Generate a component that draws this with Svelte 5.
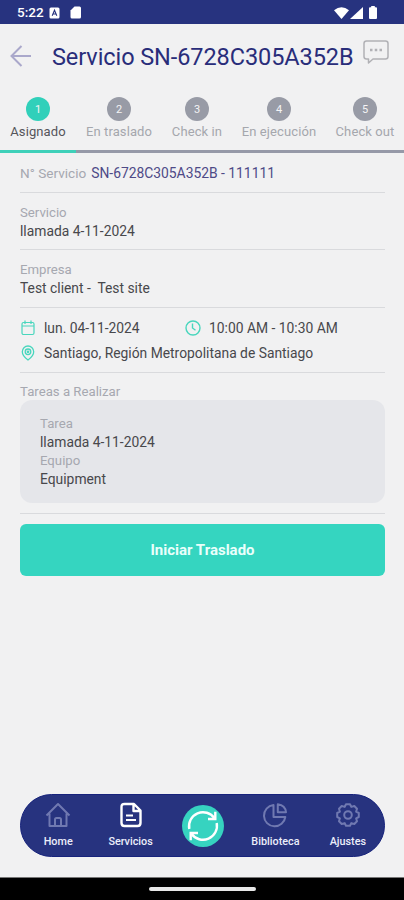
<script lang="ts">
    type Step = { label: string; width: number };
    type Tab = { id: string; label: string };

    const steps: Array<Step> = [
        { label: "Asignado", width: 76 },
        { label: "En traslado", width: 86 },
        { label: "Check in", width: 70 },
        { label: "En ejecución", width: 94 },
        { label: "Check out", width: 78 },
    ];
    const tabs: Array<Tab> = [
        { id: "home", label: "Home" },
        { id: "services", label: "Servicios" },
        { id: "sync", label: "" },
        { id: "library", label: "Biblioteca" },
        { id: "settings", label: "Ajustes" },
    ];

    let currentStep = $state(0);
    let currentTab = $state("services");
    const serviceCode = "SN-6728C305A352B";
</script>

<div class="screen">
    <div class="status-bar">
        <span class="time">5:22</span>
        <svg class="app-badge" width="11" height="12" viewBox="0 0 11 12">
            <rect x="0.5" y="0.5" width="10" height="11" rx="1.5" fill="#fff" />
            <path d="M3.2 8.8 5.5 3.2 7.8 8.8M4.1 7h2.8" fill="none" stroke="#27337f" stroke-width="1.1" />
        </svg>
        <svg width="12" height="13" viewBox="0 0 12 13">
            <path d="M4.5 0.5H9.5Q11 .5 11 2V11Q11 12.5 9.500 12.500H2Q.5 12.500 .5 11V4.500Z" fill="#fff" />
        </svg>
        <div class="signals">
            <svg width="15" height="12" viewBox="0 0 15 12">
                <path d="M0 3.200Q7.500-2.600 15 3.200L7.500 12Z" fill="#fff" />
            </svg>
            <svg width="13" height="12" viewBox="0 0 13 12"><path d="M13 0V12H0Z" fill="#fff" /></svg>
            <svg class="battery" width="8" height="13" viewBox="0 0 8 13">
                <path d="M2.200 0h3.600v1.300H7q1 0 1 1V12q0 1-1 1H1q-1 0-1-1V2.300q0-1 1-1h1.200Z" fill="#fff" />
            </svg>
        </div>
    </div>

    <header>
        <button class="back" aria-label="Volver">
            <svg width="22" height="22" viewBox="0 0 22 22" fill="none" stroke="#aaa8cb" stroke-width="2">
                <path d="M21 11H2M11.500 1 1.500 11l10 10" />
            </svg>
        </button>
        <h1>Servicio {serviceCode}</h1>
        <button class="chat" aria-label="Chat">
            <svg width="26" height="24" viewBox="0 0 26 24" fill="none" stroke="#b1b1b5" stroke-width="1.500">
                <path d="M3.500 1H22.500Q25 1 25 3.500V16.500Q25 19 22.500 19H10L5.500 23V19H3.500Q1 19 1 16.500V3.500Q1 1 3.500 1Z" stroke-linejoin="round" />
                <path d="M7 10h2.500M11.750 10h2.500M16.500 10H19" stroke-width="2.500" />
            </svg>
        </button>
    </header>

    <div class="steps">
        {#each steps as step, i}
            <button class="step" class:active={i == currentStep} style="width: {step.width}px" onclick={() => currentStep = i}>
                <span class="number">{i + 1}</span>
                <span class="step-label">{step.label}</span>
            </button>
        {/each}
    </div>

    <main>
        <section class="service-number">
            <span class="muted">N° Servicio</span>
            <span class="code">{serviceCode} - 111111</span>
        </section>
        <section class="field">
            <div class="muted">Servicio</div>
            <div>llamada 4-11-2024</div>
        </section>
        <section class="field company">
            <div class="muted">Empresa</div>
            <div>Test client -&nbsp; Test site</div>
        </section>
        <section class="schedule">
            <div class="when">
                <div class="info date">
                    <svg width="16" height="16" viewBox="0 0 16 16" fill="none" stroke="#48d6bd" stroke-width="1.200">
                        <rect x="2" y="2.500" width="12" height="12" rx="1.500" />
                        <path d="M2 6h12M5 .5v3.500M11 .5v3.500" />
                    </svg>
                    <span>lun. 04-11-2024</span>
                </div>
                <div class="info">
                    <svg width="16" height="16" viewBox="0 0 16 16" fill="none" stroke="#48d6bd" stroke-width="1.400">
                        <circle cx="8" cy="8" r="7" />
                        <path d="M7.500 3.500V8l3 2.200" />
                    </svg>
                    <span>10:00 AM - 10:30 AM</span>
                </div>
            </div>
            <div class="info">
                <svg width="16" height="16" viewBox="0 0 16 16" fill="none" stroke="#48d6bd" stroke-width="1.300">
                    <path d="M8 15Q2.300 10.800 2.300 6.700A5.700 5.700 0 0 1 13.700 6.700Q13.700 10.800 8 15Z" />
                    <circle cx="8" cy="6.800" r="2.800" />
                    <circle cx="8" cy="6.800" r="0.700" />
                </svg>
                <span>Santiago, Región Metropolitana de Santiago</span>
            </div>
        </section>
        <section class="tasks">
            <div class="muted">Tareas a Realizar</div>
            <div class="card">
                <div class="muted">Tarea</div>
                <div>llamada 4-11-2024</div>
                <div class="muted">Equipo</div>
                <div>Equipment</div>
            </div>
        </section>
        <button class="start">Iniciar Traslado</button>
    </main>

    <nav>
        {#each tabs as tab}
            <button class="tab" class:selected={tab.id == currentTab} aria-label={tab.label || "Sincronizar"} onclick={() => currentTab = tab.id}>
                {#if tab.id == "sync"}
                    <svg class="sync" width="42" height="42" viewBox="0 0 42 42" fill="none" stroke="#fff" stroke-width="2.400">
                        <circle cx="21" cy="21" r="21" fill="#36d3c0" stroke="none" />
                        <path d="M7.300 24A14 14 0 0 1 32.500 13.200M34.700 18A14 14 0 0 1 9.500 28.800" />
                        <path d="M33.300 6.800V14H26M8.700 35.200V28H16" />
                    </svg>
                {:else}
                    <svg width="26" height="26" viewBox="0 0 26 26" fill="none" stroke="currentColor" stroke-width="2" stroke-linejoin="round">
                        {#if tab.id == "home"}
                            <path d="M1.500 13.500 13 2l11.500 11.500M4.500 11.500V24H21.500V11.500M10 24V17.500Q10 16 11.500 16H14.500Q16 16 16 17.500V24" />
                        {:else if tab.id == "services"}
                            <path d="M6.500 2H16L22.500 8.500V21Q22.500 24 19.500 24H6.500Q3.500 24 3.500 21V5Q3.500 2 6.500 2ZM15.500 2V9H22.500" stroke-width="2.400" />
                            <path d="M8 13.500H15M8 18H18" stroke-width="2.200" />
                        {:else if tab.id == "library"}
                            <path d="M11.500 3A10.700 10.700 0 1 0 23.300 15H11.500ZM15.800 2.300V10.300H24Q23.300 3.300 15.800 2.300Z" />
                        {:else}
                            <circle cx="13" cy="13" r="3.800" />
                            <path d="M11 2.200H15L16.300 4.900 19.300 4 22 6.700 21.100 9.700 23.800 11V15L21.100 16.300 22 19.300 19.300 22 16.300 21.100 15 23.800H11L9.700 21.100 6.700 22 4 19.300 4.900 16.300 2.200 15V11L4.900 9.700 4 6.700 6.700 4 9.700 4.900Z" />
                        {/if}
                    </svg>
                    <span>{tab.label}</span>
                {/if}
            </button>
        {/each}
    </nav>
    <div class="system-bar"><span></span></div>
</div>

<style>
    :global(body) {
        margin: 0;
        background: #f1f1f2;
    }

    .screen {
        box-sizing: border-box;
        display: flex;
        flex-direction: column;
        width: 404px;
        height: 900px;
        overflow: hidden;
        background: #f1f1f2;
        color: #48484c;
        font: 13.85px/18px Roboto, sans-serif;
        white-space: nowrap;
    }

    button {
        padding: 0;
        border: none;
        background: none;
        color: inherit;
        font: inherit;
        cursor: pointer;
    }

    svg {
        display: block;
        flex: none;
    }

    .status-bar {
        display: flex;
        align-items: center;
        box-sizing: border-box;
        height: 24px;
        padding: 1px 27px 0 17px;
        background: #27337f;
        color: #fff;
    }

    .time {
        width: 32px;
        margin-top: -1px;
        font-size: 13.5px;
        font-weight: 500;
    }

    .app-badge {
        margin-right: 10px;
    }

    .signals {
        display: flex;
        align-items: center;
        gap: 1px;
        margin-left: auto;
    }

    .battery {
        margin-left: 5px;
    }

    header {
        display: flex;
        align-items: center;
        height: 64px;
    }

    .back {
        margin-left: 10px;
    }

    h1 {
        width: 302px;
        margin: 2px 9px 0 20px;
        color: #292d7a;
        font-size: 23.5px;
        font-weight: 400;
        line-height: 30px;
        letter-spacing: -0.08px;
    }

    .chat {
        margin-top: -8px;
    }

    .steps {
        display: flex;
        height: 65px;
    }

    .step {
        display: flex;
        flex-direction: column;
        align-items: center;
        box-sizing: border-box;
        padding-top: 9px;
        border-bottom: 3px solid #9699a8;
        color: #a5a7ad;
        font-size: 13px;
        letter-spacing: 0.1px;
    }

    .number {
        width: 24px;
        height: 24px;
        margin-bottom: 2px;
        border-radius: 50%;
        background: #989ba6;
        color: #f4f4f5;
        font-size: 11px;
        line-height: 25px;
        letter-spacing: 0;
    }

    .step.active {
        border-color: #3fd0b9;
        color: #55555b;
    }

    .active .number {
        background: #31d0ba;
    }

    main {
        display: flex;
        flex: 1;
        flex-direction: column;
        padding: 0 19px 0 20px;
    }

    section {
        box-sizing: border-box;
        border-bottom: 1px solid #d9dadd;
    }

    .muted {
        color: #a6a8b0;
        font-size: 13.2px;
    }

    .service-number {
        display: flex;
        gap: 5px;
        height: 40px;
        padding-top: 11px;
    }

    .service-number .muted {
        font-size: 13.6px;
    }

    .code {
        color: #4e4a87;
    }

    .field {
        height: 57px;
        padding-top: 11px;
    }

    .company {
        height: 58px;
    }

    .schedule {
        height: 65px;
        padding-top: 11px;
    }

    .when {
        display: flex;
        margin-bottom: 7px;
    }

    .info {
        display: flex;
        align-items: center;
        gap: 8px;
    }

    .date {
        width: 165px;
    }

    .tasks {
        height: 141px;
        padding-top: 10px;
    }

    .card {
        box-sizing: border-box;
        height: 103px;
        margin-top: -1px;
        padding: 15px 20px;
        border-radius: 12px;
        background: #e5e6ea;
        line-height: 18.400px;
    }

    .start {
        height: 52px;
        margin-top: 10px;
        border-radius: 6px;
        background: #35d5c0;
        color: #e9fffb;
        font-size: 15px;
        font-weight: 700;
    }

    nav {
        display: flex;
        box-sizing: border-box;
        height: 63px;
        margin: 0 19px 20px 20px;
        padding-left: 1px;
        border: 1px solid #17237c;
        border-radius: 32px;
        background: #27337f;
    }

    .tab {
        display: flex;
        flex: 1;
        flex-direction: column;
        align-items: center;
        padding-top: 7px;
        color: #7079b1;
    }

    .tab.selected {
        color: #fff;
    }

    .tab span {
        margin-top: 6px;
        color: #eceefa;
        font-size: 10.8px;
        font-weight: 500;
        line-height: 16px;
    }

    .sync {
        margin-top: 3px;
    }

    .system-bar {
        display: flex;
        align-items: center;
        justify-content: center;
        box-sizing: border-box;
        height: 23px;
        border-top: 1px solid #777;
        background: #000;
    }

    .system-bar span {
        width: 107px;
        height: 4px;
        border-radius: 2px;
        background: #e8e8e8;
    }
</style>
